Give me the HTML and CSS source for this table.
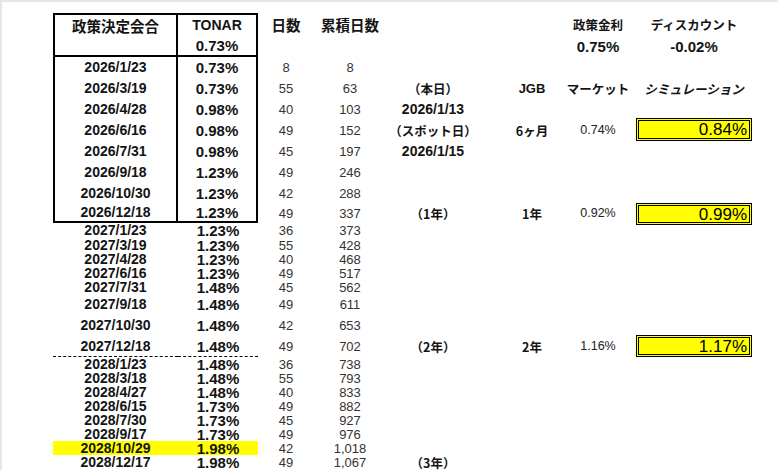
FILE: index.html
```html
<!DOCTYPE html>
<html lang="ja">
<head>
<meta charset="utf-8">
<title>TONAR シミュレーション</title>
<link rel="stylesheet" href="styles.css">
</head>
<body>
<div class="sheet">
  <div class="row h22 boxed top">
    <div class="cell date head">政策決定会合</div>
    <div class="cell rate head">TONAR</div>
    <div class="cell days head">日数</div>
    <div class="cell cum head">累積日数</div>
    <div class="cell mkt note">政策金利</div>
    <div class="cell sim note">ディスカウント</div>
  </div>
  <div class="row h22 boxed bottom">
    <div class="cell date"></div>
    <div class="cell rate">0.73%</div>
    <div class="cell mkt big">0.75%</div>
    <div class="cell sim big">-0.02%</div>
  </div>

  <div class="row h21 boxed">
    <div class="cell date">2026/1/23</div><div class="cell rate">0.73%</div>
    <div class="cell days">8</div><div class="cell cum">8</div>
  </div>
  <div class="row h21 boxed">
    <div class="cell date">2026/3/19</div><div class="cell rate">0.73%</div>
    <div class="cell days">55</div><div class="cell cum">63</div>
    <div class="cell memo note">（本日）</div>
    <div class="cell jgb note latin">JGB</div>
    <div class="cell mkt note">マーケット</div>
    <div class="cell sim note italic">シミュレーション</div>
  </div>
  <div class="row h21 boxed">
    <div class="cell date">2026/4/28</div><div class="cell rate">0.98%</div>
    <div class="cell days">40</div><div class="cell cum">103</div>
    <div class="cell memo day">2026/1/13</div>
  </div>
  <div class="row h21 boxed">
    <div class="cell date">2026/6/16</div><div class="cell rate">0.98%</div>
    <div class="cell days">49</div><div class="cell cum">152</div>
    <div class="cell memo note">（スポット日）</div>
    <div class="cell jgb note">6ヶ月</div>
    <div class="cell mkt val">0.74%</div>
    <div class="cell sim"><div class="simbox s23">0.84%</div></div>
  </div>
  <div class="row h21 boxed">
    <div class="cell date">2026/7/31</div><div class="cell rate">0.98%</div>
    <div class="cell days">45</div><div class="cell cum">197</div>
    <div class="cell memo day">2026/1/15</div>
  </div>
  <div class="row h21 boxed">
    <div class="cell date">2026/9/18</div><div class="cell rate">1.23%</div>
    <div class="cell days">49</div><div class="cell cum">246</div>
  </div>
  <div class="row h21 boxed">
    <div class="cell date">2026/10/30</div><div class="cell rate">1.23%</div>
    <div class="cell days">42</div><div class="cell cum">288</div>
  </div>
  <div class="row h19 boxed bottom">
    <div class="cell date">2026/12/18</div><div class="cell rate">1.23%</div>
    <div class="cell days">49</div><div class="cell cum">337</div>
    <div class="cell memo note">（1年）</div>
    <div class="cell jgb note">1年</div>
    <div class="cell mkt val">0.92%</div>
    <div class="cell sim"><div class="simbox s22">0.99%</div></div>
  </div>

  <div class="row h15">
    <div class="cell date">2027/1/23</div><div class="cell rate">1.23%</div>
    <div class="cell days">36</div><div class="cell cum">373</div>
  </div>
  <div class="row h14">
    <div class="cell date">2027/3/19</div><div class="cell rate">1.23%</div>
    <div class="cell days">55</div><div class="cell cum">428</div>
  </div>
  <div class="row h14">
    <div class="cell date">2027/4/28</div><div class="cell rate">1.23%</div>
    <div class="cell days">40</div><div class="cell cum">468</div>
  </div>
  <div class="row h14">
    <div class="cell date">2027/6/16</div><div class="cell rate">1.23%</div>
    <div class="cell days">49</div><div class="cell cum">517</div>
  </div>
  <div class="row h14">
    <div class="cell date">2027/7/31</div><div class="cell rate">1.48%</div>
    <div class="cell days">45</div><div class="cell cum">562</div>
  </div>
  <div class="row h21">
    <div class="cell date">2027/9/18</div><div class="cell rate">1.48%</div>
    <div class="cell days">49</div><div class="cell cum">611</div>
  </div>
  <div class="row h21">
    <div class="cell date">2027/10/30</div><div class="cell rate">1.48%</div>
    <div class="cell days">42</div><div class="cell cum">653</div>
  </div>
  <div class="row h21 dashed">
    <div class="cell date">2027/12/18</div><div class="cell rate">1.48%</div>
    <div class="cell days">49</div><div class="cell cum">702</div>
    <div class="cell memo note">（2年）</div>
    <div class="cell jgb note">2年</div>
    <div class="cell mkt val">1.16%</div>
    <div class="cell sim"><div class="simbox s22">1.17%</div></div>
  </div>

  <div class="row h14">
    <div class="cell date">2028/1/23</div><div class="cell rate">1.48%</div>
    <div class="cell days">36</div><div class="cell cum">738</div>
  </div>
  <div class="row h14">
    <div class="cell date">2028/3/18</div><div class="cell rate">1.48%</div>
    <div class="cell days">55</div><div class="cell cum">793</div>
  </div>
  <div class="row h14">
    <div class="cell date">2028/4/27</div><div class="cell rate">1.48%</div>
    <div class="cell days">40</div><div class="cell cum">833</div>
  </div>
  <div class="row h14">
    <div class="cell date">2028/6/15</div><div class="cell rate">1.73%</div>
    <div class="cell days">49</div><div class="cell cum">882</div>
  </div>
  <div class="row h14">
    <div class="cell date">2028/7/30</div><div class="cell rate">1.73%</div>
    <div class="cell days">45</div><div class="cell cum">927</div>
  </div>
  <div class="row h14">
    <div class="cell date">2028/9/17</div><div class="cell rate">1.73%</div>
    <div class="cell days">49</div><div class="cell cum">976</div>
  </div>
  <div class="row h14 marked">
    <div class="cell date">2028/10/29</div><div class="cell rate">1.98%</div>
    <div class="cell days">42</div><div class="cell cum">1,018</div>
  </div>
  <div class="row h14">
    <div class="cell date">2028/12/17</div><div class="cell rate">1.98%</div>
    <div class="cell days">49</div><div class="cell cum">1,067</div>
    <div class="cell memo note">（3年）</div>
  </div>
</div>
</body>
</html>
```

FILE: styles.css
```css
* { box-sizing: border-box; }

html, body {
  margin: 0;
  background: #ffffff;
}

body {
  height: 470px;
  overflow: hidden;
  border-left: 2px solid #e6e6e6;
  border-top: 2px solid #e6e6e6;
  font-family: "Liberation Sans", "Noto Sans CJK JP", sans-serif;
  color: #141414;
}

.sheet {
  padding-top: 11px;
}

.row {
  display: grid;
  grid-template-columns: 51px 125px 80px 56px 72px 94px 20px 64px 68px 124px;
}

.h22 { grid-template-rows: 22px; }
.h21 { grid-template-rows: 21px; }
.h19 { grid-template-rows: 19px; }
.h15 { grid-template-rows: 15px; }
.h14 { grid-template-rows: 14px; }

.cell {
  display: flex;
  align-items: center;
  justify-content: center;
  white-space: nowrap;
  line-height: 13px;
  grid-row: 1;
}

.date { grid-column: 2; font-size: 14px; font-weight: 700; }
.rate { grid-column: 3; font-size: 15px; font-weight: 700; }
.days { grid-column: 4; }
.cum  { grid-column: 5; }
.memo { grid-column: 6; }
.jgb  { grid-column: 8; }
.mkt  { grid-column: 9; }
.sim  { grid-column: 10; }

.days, .cum {
  font-size: 13px;
  font-weight: 400;
  color: #333333;
}

.head {
  font-family: "Noto Sans CJK JP", sans-serif;
  font-size: 14.5px;
  font-weight: 700;
  color: #141414;
}

.rate.head {
  font-family: "Liberation Sans", sans-serif;
  font-size: 14px;
}

.note {
  font-family: "Noto Sans CJK JP", sans-serif;
  font-size: 12.5px;
  font-weight: 700;
}

.note.latin {
  font-family: "Liberation Sans", sans-serif;
  font-size: 13px;
}

.italic { font-style: italic; }

.big {
  font-size: 15px;
  font-weight: 700;
}

.day {
  font-size: 14px;
  font-weight: 700;
}

.val {
  font-size: 12.5px;
  font-weight: 400;
  color: #222222;
}

/* boxed area (TONAR table) */
.boxed .date {
  border-left: 2px solid #000;
  border-right: 2px solid #000;
}
.boxed .rate {
  border-right: 2px solid #000;
}
.top .date, .top .rate {
  border-top: 2px solid #000;
}
.bottom .date, .bottom .rate {
  border-bottom: 2px solid #000;
}

.dashed .date, .dashed .rate {
  border-bottom: 1px dashed #000;
}

.marked .date, .marked .rate {
  background: #ffff00;
}

/* simulation result cells */
.sim .simbox {
  align-self: start;
  width: 116px;
  background: #ffff00;
  border: 3px double #000;
  font-size: 17px;
  font-weight: 400;
  color: #000;
  padding-right: 2px;
  display: flex;
  align-items: center;
  justify-content: flex-end;
}
.s23 { height: 23px; margin-top: -2px; }
.s22 { height: 22px; margin-top: -1px; }
```
